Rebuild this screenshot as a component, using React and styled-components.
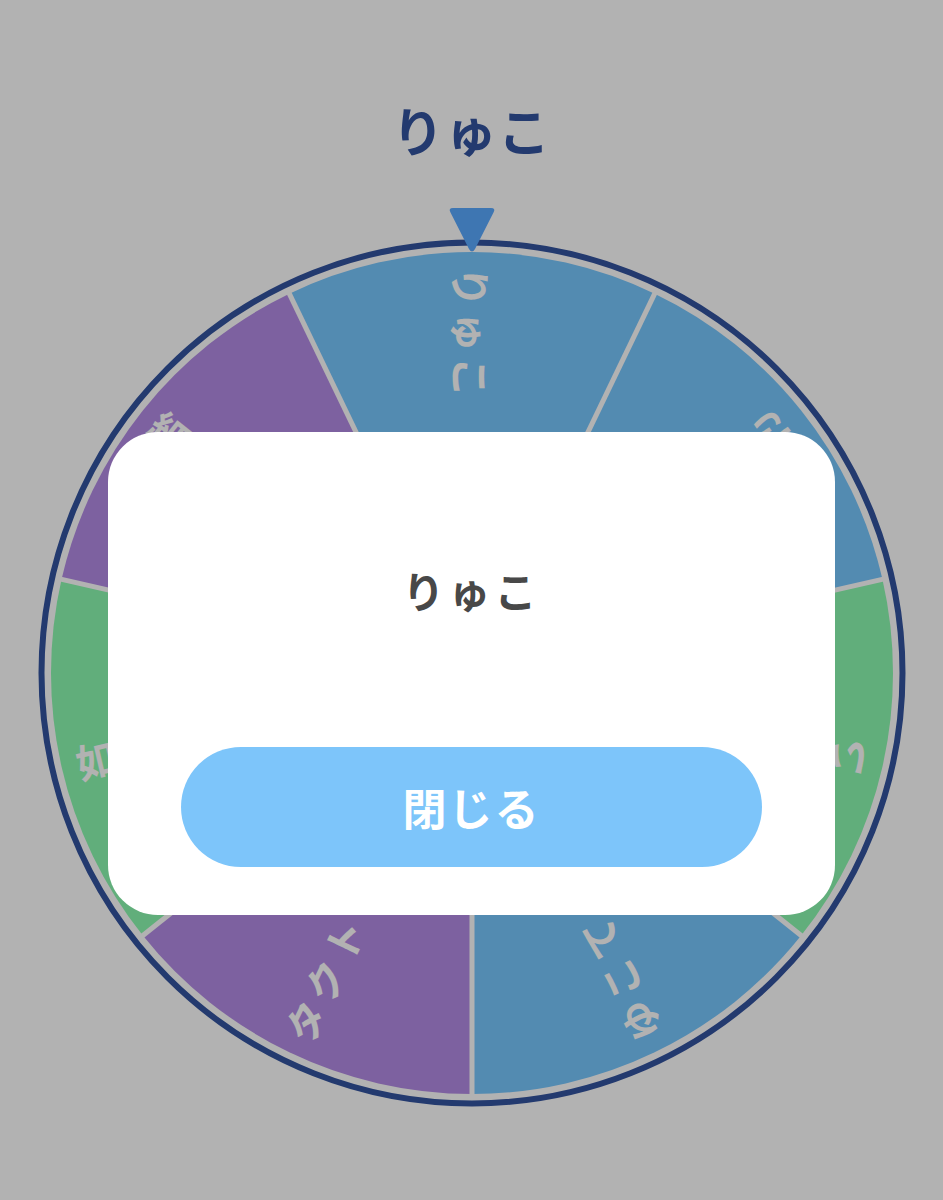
import React from 'react'
import styled, { createGlobalStyle } from 'styled-components'

const GlobalStyle = createGlobalStyle`
  html, body {
    margin: 0;
    padding: 0;
    background: #ffffff;
    font-family: "Noto Sans CJK JP", "Noto Sans", sans-serif;
  }
`

const SIZE = 868
const C = SIZE / 2
const SEG_R = 421
const FONT = '"Noto Sans CJK JP", "Noto Sans", sans-serif'

const items = [
  { name: 'りゅこ', color: '#78c7fe' },
  { name: 'さくら', color: '#78c7fe' },
  { name: 'いおり', color: '#8cf9b0' },
  { name: 'ゆこて', color: '#78c7fe' },
  { name: 'タクト', color: '#b48ce5' },
  { name: '如月', color: '#8cf9b0' },
  { name: '細川', color: '#b48ce5' },
]

const Page = styled.main`
  min-height: 1200px;
  display: flex;
  flex-direction: column;
  align-items: center;
  padding-top: 91px;
  box-sizing: border-box;
`

const Result = styled.h1`
  margin: 0;
  font-size: 52px;
  line-height: 78px;
  font-weight: 700;
  letter-spacing: 1px;
  color: #33539f;
`

const WheelBox = styled.div`
  position: relative;
  width: ${SIZE}px;
  height: ${SIZE}px;
  margin-top: 70px;

  svg {
    display: block;
  }
`

const Pointer = styled.div`
  position: absolute;
  top: -32px;
  left: 50%;
  width: 48px;
  height: 48px;
  transform: translateX(-50%);
  z-index: 2;
`

const Overlay = styled.div`
  position: fixed;
  inset: 0;
  background: rgba(0, 0, 0, 0.3);
  display: flex;
  justify-content: center;
  align-items: flex-start;
  padding-top: 432px;
  z-index: 10;
`

const Modal = styled.div`
  width: 727px;
  box-sizing: border-box;
  background: #ffffff;
  border-radius: 50px;
  padding: 126px 73px 48px;
  display: flex;
  flex-direction: column;
  gap: 126px;
`

const ModalTitle = styled.p`
  margin: 0;
  text-align: center;
  font-size: 42px;
  line-height: 63px;
  font-weight: 700;
  letter-spacing: 4px;
  color: #484848;
`

const CloseButton = styled.button`
  height: 120px;
  border: none;
  border-radius: 60px;
  background: #7dc5fa;
  color: #ffffff;
  font-family: ${FONT};
  font-size: 44px;
  font-weight: 700;
  letter-spacing: 2px;
  cursor: pointer;
`

const point = (deg, r) => {
  const a = (deg * Math.PI) / 180
  return [C + r * Math.sin(a), C - r * Math.cos(a)]
}

const Wheel = () => {
  const step = 360 / items.length
  return (
    <svg width={SIZE} height={SIZE} viewBox={`0 0 ${SIZE} ${SIZE}`}>
      <circle cx={C} cy={C} r={430.5} fill="none" stroke="#33539f" strokeWidth="6" />
      {items.map((item, i) => {
        const mid = i * step
        const [x1, y1] = point(mid - step / 2, SEG_R)
        const [x2, y2] = point(mid + step / 2, SEG_R)
        return (
          <path
            key={item.name}
            d={`M${C} ${C} L${x1} ${y1} A${SEG_R} ${SEG_R} 0 0 1 ${x2} ${y2} Z`}
            fill={item.color}
          />
        )
      })}
      {items.map((item, i) => {
        const [x, y] = point(i * step - step / 2, SEG_R + 2)
        return <line key={`l${i}`} x1={C} y1={C} x2={x} y2={y} stroke="#ffffff" strokeWidth="5" />
      })}
      {items.map((item, i) => (
        <g key={`t${i}`} transform={`rotate(${i * step} ${C} ${C})`}>
          <text
            x={C}
            y={C - 406}
            transform={`rotate(90 ${C} ${C - 406})`}
            fill="#ffffff"
            fontFamily={FONT}
            fontSize="40"
            fontWeight="600"
            letterSpacing="5"
            dominantBaseline="central"
          >
            {item.name}
          </text>
        </g>
      ))}
    </svg>
  )
}

const App = () => {
  return (
    <>
      <GlobalStyle />
      <Page>
        <Result>りゅこ</Result>
        <WheelBox>
          <Pointer>
            <svg width="48" height="48" viewBox="0 0 48 48">
              <path
                d="M5 1 H43 Q48 1 45.5 5.5 L27 42 Q24 47 21 42 L2.5 5.5 Q0 1 5 1 Z"
                fill="#5aa9ff"
              />
            </svg>
          </Pointer>
          <Wheel />
        </WheelBox>
      </Page>
      <Overlay>
        <Modal>
          <ModalTitle>りゅこ</ModalTitle>
          <CloseButton type="button">閉じる</CloseButton>
        </Modal>
      </Overlay>
    </>
  )
}

export default App
